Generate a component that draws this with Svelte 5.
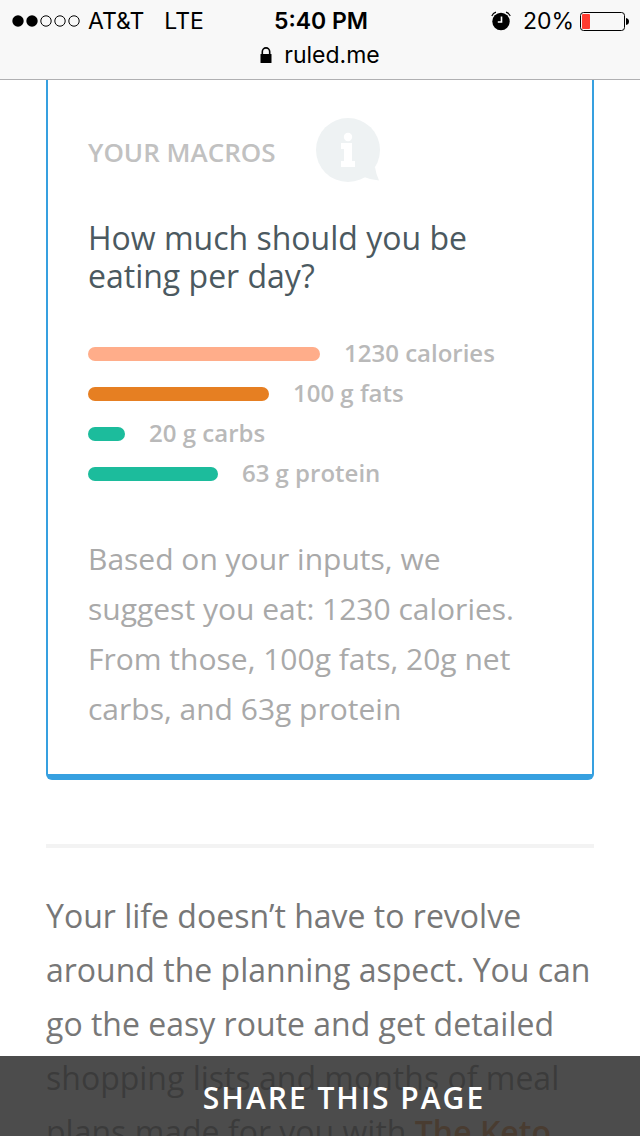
<script>
  // --- DATA ---
  const macros = [
    { label: '1230 calories', width: 50, color: '#ffad8a' },
    { label: '100 g fats', width: 39, color: '#e67f22' },
    { label: '20 g carbs', width: 8, color: '#1cbc9c' },
    { label: '63 g protein', width: 28, color: '#1cbc9c' }
  ];

  const signal = [true, true, false, false, false];

  async function share() {
    if (navigator.share) {
      await navigator.share({ title: 'Your Macros', url: location.href });
    }
  }
</script>

<div class="screen">
  <header class="browser-bar">
    <div class="status">
      <div class="carrier">
        <svg class="signal" viewBox="0 0 68 12" aria-hidden="true">
          {#each signal as on, i}
            <circle cx={6 + i * 14} cy="6" r={on ? 5.7 : 5.2} fill={on ? '#000' : 'none'} stroke="#000" stroke-width={on ? 0 : 1} />
          {/each}
        </svg>
        <span>AT&amp;T</span>
        <span class="network">LTE</span>
      </div>
      <strong class="time">5:40 PM</strong>
      <div class="power">
        <svg class="alarm" viewBox="0 0 20 20" aria-hidden="true">
          <circle cx="10" cy="10.5" r="8.7" />
          <path d="M0.8 5Q2 2 5 1.2M19.2 5Q18 2 15 1.2" fill="none" stroke="#000" stroke-width="1.2" />
          <path d="M10.5 5.5V11H6.8" fill="none" stroke="#fff" stroke-width="1.6" />
        </svg>
        <span>20%</span>
        <svg class="battery" viewBox="0 0 50 20" aria-hidden="true">
          <rect x="0.5" y="1.5" width="44" height="18" rx="3" fill="none" stroke="#000" />
          <rect x="2" y="3" width="8" height="15" rx="1" fill="#ff3b30" />
          <path d="M46 7Q49 7.5 49 10.5T46 14Z" />
        </svg>
      </div>
    </div>
    <div class="address">
      <svg class="lock" viewBox="0 0 12 16" aria-hidden="true">
        <path d="M2.3 8V4.7a3.7 3.8 0 0 1 7.4 0V8" fill="none" stroke="#000" stroke-width="1.6" />
        <rect x="0.5" y="7" width="11" height="9" rx="0.5" />
      </svg>
      <span>ruled.me</span>
    </div>
  </header>

  <main>
    <section class="card">
      <div class="card-title">
        <h2>YOUR MACROS</h2>
        <svg class="info" viewBox="0 0 64 64" aria-hidden="true">
          <circle cx="32" cy="32" r="32" fill="#eef2f3" />
          <path d="M59 49Q60 56 63 62.5Q55 62 48 59Z" fill="#eef2f3" />
          <circle cx="32" cy="19" r="4.2" fill="#fff" />
          <path d="M25 25H36V43H39V49H25V43H28V31H25Z" fill="#fff" />
        </svg>
      </div>

      <h1>How much should you be eating per day?</h1>

      <ul class="bars">
        {#each macros as macro}
          <li>
            <span class="bar" style="width: {macro.width}%; background: {macro.color}"></span>
            <span class="amount">{macro.label}</span>
          </li>
        {/each}
      </ul>

      <p class="summary">
        Based on your inputs, we suggest you eat: 1230 calories. From those, 100g fats, 20g net carbs, and 63g protein
      </p>
    </section>

    <hr />

    <p class="intro">
      Your life doesn’t have to revolve around the planning aspect. You can go the easy route and get detailed shopping lists and months of meal plans made for you with <a href="#keto">The Keto</a>
    </p>
  </main>

  <button class="share" on:click={share}>SHARE THIS PAGE</button>
</div>

<style>
  :global(body) {
    margin: 0;
    background: #fff;
  }

  .screen {
    position: relative;
    display: flex;
    flex-direction: column;
    height: 100vh;
    overflow: hidden;
    font-family: 'Open Sans', sans-serif;
  }

  /* --- BROWSER BAR --- */
  .browser-bar {
    flex: none;
    padding: 6px 12px 9px;
    background: #f8f8f8;
    border-bottom: 1px solid #b0b0b2;
    color: #000;
    font-family: Inter, sans-serif;
    font-size: 23px;
    line-height: 30px;
  }

  .status {
    display: grid;
    grid-template-columns: 1fr auto 1fr;
    align-items: center;
    margin-right: -2px;
  }

  .carrier, .power, .address {
    display: flex;
    align-items: center;
  }

  .carrier { gap: 8px; }
  .network { margin-left: 12px; }
  .time { font-weight: 600; }
  .power { justify-content: flex-end; gap: 6px; }

  .signal { width: 68px; height: 12px; }
  .alarm { width: 20px; height: 20px; margin-right: 6px; }
  .battery { width: 50px; height: 20px; }

  .address {
    justify-content: center;
    gap: 12px;
    padding-top: 4px;
  }
  .lock { width: 12px; height: 16px; }

  /* --- CONTENT --- */
  main {
    flex: 1;
    min-height: 0;
    padding: 0 46px;
    overflow-y: auto;
    scrollbar-width: none;
  }

  .card {
    padding: 38px 40px 40px;
    border: 2px solid #36a0e0;
    border-top: 0;
    border-bottom-width: 6px;
    border-radius: 0 0 6px 6px;
  }

  .card-title {
    display: flex;
    align-items: center;
    gap: 40px;
  }

  h2 {
    margin: 0;
    padding-top: 4px;
    color: #c1c1c1;
    font-size: 26px;
    font-weight: 600;
    line-height: 38px;
  }

  .info { width: 64px; height: 64px; }

  h1 {
    margin: 37px 0 0;
    color: #4b5960;
    font-size: 32px;
    font-weight: 400;
    line-height: 38px;
  }

  .bars {
    margin: 39px 0 0;
    padding: 0;
    list-style: none;
  }

  .bars li {
    display: flex;
    align-items: center;
    gap: 24px;
    height: 40px;
    color: #b9b9b9;
    font-size: 24px;
    font-weight: 600;
    line-height: 38px;
    white-space: nowrap;
  }

  .bar {
    height: 14px;
    border-radius: 7px;
  }

  .amount { padding-bottom: 2px; }

  .summary {
    margin: 40px 0 0;
    color: #a9a9a9;
    font-size: 30px;
    line-height: 50px;
  }

  hr {
    height: 4px;
    margin: 64px 0 41px;
    border: 0;
    background: #f3f3f3;
  }

  .intro {
    margin: 0;
    color: #777;
    font-size: 32px;
    line-height: 54px;
  }

  .intro a {
    color: #e67f22;
    font-weight: 600;
    text-decoration: none;
  }

  /* --- SHARE BAR --- */
  .share {
    position: absolute;
    right: 0;
    bottom: 0;
    left: 0;
    height: 80px;
    padding: 2px 0 0 48px;
    border: 0;
    background: rgba(51, 51, 51, 0.88);
    color: #fff;
    font-family: inherit;
    font-size: 30px;
    font-weight: 600;
    letter-spacing: 2px;
    cursor: pointer;
  }
</style>
